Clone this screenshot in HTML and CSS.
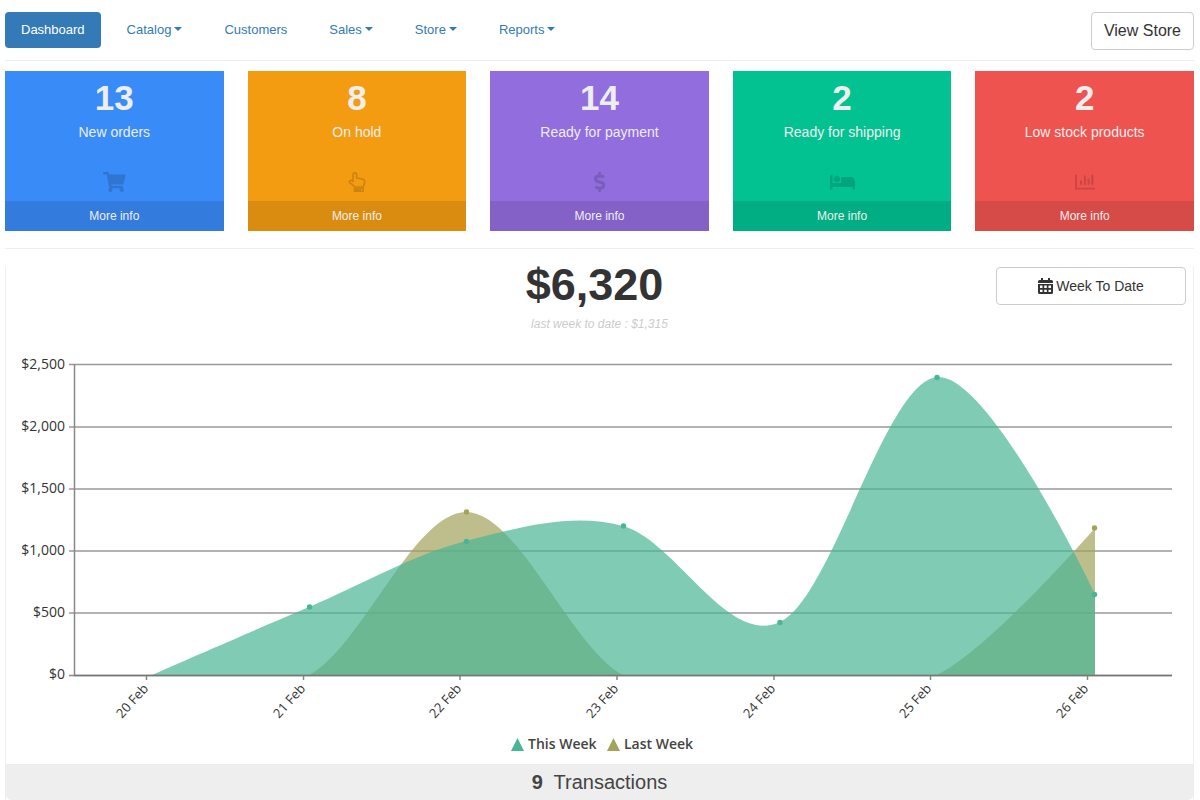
FILE: index.html
```html
<!DOCTYPE html>
<html lang="en">
<head>
<meta charset="utf-8">
<title>Dashboard</title>
<link rel="stylesheet" href="styles.css">
</head>
<body>
<header class="topbar">
  <nav class="tabs">
    <a class="tab active" href="#">Dashboard</a>
    <button class="tab" type="button">Catalog<span class="caret"></span></button>
    <a class="tab" href="#">Customers</a>
    <button class="tab" type="button">Sales<span class="caret"></span></button>
    <button class="tab" type="button">Store<span class="caret"></span></button>
    <button class="tab" type="button">Reports<span class="caret"></span></button>
  </nav>
  <button class="btn view-store" type="button">View Store</button>
</header>

<main>
  <section class="cards">
    <article class="card blue">
      <strong class="count">13</strong>
      <span class="label">New orders</span>
      <svg class="icon" viewBox="0 0 576 512"><path d="M528.12 301.319l47.273-208C578.806 78.301 567.391 64 551.99 64H159.208l-9.166-44.81C147.758 8.021 137.93 0 126.529 0H24C10.745 0 0 10.745 0 24v16c0 13.255 10.745 24 24 24h69.883l70.248 343.435C147.325 417.1 136 435.222 136 456c0 30.928 25.072 56 56 56s56-25.072 56-56c0-15.674-6.447-29.835-16.824-40h209.647C430.447 426.165 424 440.326 424 456c0 30.928 25.072 56 56 56s56-25.072 56-56c0-22.172-12.888-41.332-31.579-50.405l5.517-24.276c3.413-15.018-8.002-29.319-23.403-29.319H218.117l-6.545-32h293.145c11.206 0 20.92-7.754 23.403-18.681z"/></svg>
      <a class="more" href="#">More info</a>
    </article>
    <article class="card orange">
      <strong class="count">8</strong>
      <span class="label">On hold</span>
      <svg class="icon" viewBox="0 0 54 60"><path d="M15 27V8a5.500 5.500 0 0 1 11 0v10l17 3q7 2 7 8c0 7-4 9-4 16H19c-2-7-8-8-13-12-4-5 1-11 9-6z" fill="none" stroke="#000" stroke-width="5"/><path fill-rule="evenodd" d="M18 47.500h29q1 0 1 1V58q0 2-2 2H19q-2 0-2-2v-9.500q0-1 1-1zM39 52v4h4v-4z"/></svg>
      <a class="more" href="#">More info</a>
    </article>
    <article class="card purple">
      <strong class="count">14</strong>
      <span class="label">Ready for payment</span>
      <svg class="icon" viewBox="0 0 288 512"><path d="M209.2 233.4l-108-31.6C88.7 198.2 80 186.5 80 173.500c0-16.3 13.2-29.5 29.5-29.5h66.3c12.2 0 24.2 3.7 34.2 10.5 6.1 4.1 14.3 3.1 19.5-2l34.8-34c7.1-6.9 6.1-18.4-1.8-24.5C238 74.800 207.400 64.100 176 64V16c0-8.8-7.2-16-16-16h-32c-8.8 0-16 7.2-16 16v48h-2.500C45.800 64-5.400 118.700.500 183.600c4.200 46.100 39.400 83.600 83.800 96.600l102.500 30c12.500 3.700 21.200 15.300 21.200 28.300 0 16.300-13.200 29.500-29.500 29.500h-66.300C100 368 88 364.300 78 357.500c-6.100-4.100-14.300-3.100-19.500 2l-34.800 34c-7.100 6.900-6.100 18.400 1.800 24.500 24.500 19.200 55.100 29.900 86.500 30v48c0 8.800 7.200 16 16 16h32c8.800 0 16-7.200 16-16v-48.200c46.600-.9 90.300-28.600 105.700-72.700 21.500-61.600-14.600-124.800-72.500-141.700z"/></svg>
      <a class="more" href="#">More info</a>
    </article>
    <article class="card green">
      <strong class="count">2</strong>
      <span class="label">Ready for shipping</span>
      <svg class="icon" viewBox="0 0 640 512"><path d="M176 256c44.110 0 80-35.890 80-80s-35.890-80-80-80-80 35.890-80 80 35.890 80 80 80zm352-128H304c-8.840 0-16 7.160-16 16v144H64V80c0-8.840-7.160-16-16-16H16C7.160 64 0 71.160 0 80v352c0 8.840 7.160 16 16 16h32c8.840 0 16-7.160 16-16v-48h512v48c0 8.840 7.160 16 16 16h32c8.840 0 16-7.160 16-16V240c0-61.860-50.140-112-112-112z"/></svg>
      <a class="more" href="#">More info</a>
    </article>
    <article class="card red">
      <strong class="count">2</strong>
      <span class="label">Low stock products</span>
      <svg class="icon" viewBox="0 0 512 512"><path d="M12 64h24q12 0 12 12v324h452q12 0 12 12v24q0 12-12 12H20q-20 0-20-20V76q0-12 12-12zM128 220h52v105h-52zM230 92h48v233h-48zM322 168h52v157h-52zM414 68h60v257h-60z"/></svg>
      <a class="more" href="#">More info</a>
    </article>
  </section>

  <section class="panel">
    <div class="summary">
      <div class="totals">
        <h1 class="amount">$6,320</h1>
        <p class="previous">last week to date : $1,315</p>
      </div>
      <button class="btn period" type="button"><svg class="calendar" viewBox="0 0 15 16"><path fill-rule="evenodd" d="M3 0h2v2h5V0h2v2h1.500Q15 2 15 3.500V5H0V3.500Q0 2 1.500 2H3zM0 6h15v8.500q0 1.500-1.500 1.500h-12Q0 16 0 14.500zM2 7.500v2.500h2.500V7.500zM6.200 7.500v2.500h2.600V7.500zM10.500 7.500v2.500H13V7.500zM2 11.700v2.300h2.500v-2.300zM6.200 11.700v2.300h2.600v-2.300zM10.500 11.700v2.300H13v-2.300z"/></svg>Week To Date</button>
    </div>

    <svg class="chart" viewBox="6 340 1187 424" role="img" aria-label="Sales this week and last week">
      <defs><clipPath id="plot"><rect x="74" y="355" width="1098" height="321"/></clipPath></defs>
      <path class="grid" d="M69 364.500H1172M69 427H1172M69 489H1172M69 551H1172M69 613H1172"/>
      <path class="axis" d="M74.500 364V676M69 675.500H1172M146.500 676v4M303.500 676v4M460 676v4M617 676v4M774 676v4M930.500 676v4M1087.500 676v4"/>
      <g clip-path="url(#plot)">
        <path class="last" d="M152 675C152 675 257 702 309 675C361 648 414 512 466 512C518 512 571 648 623 675C675 702 728 675 780 675C832 675 885 700 937 675C989 650 1095 528 1095 528V675Z"/>
        <path class="this" d="M152 675C152 675 257 629 309 607C361 585 414 554 466 541C518 528 571 512 623 526C675 540 728 647 780 622C832 598 885 382 937 377C989 372 1095 594 1095 594V675Z"/>
      </g>
      <g class="dots-last">
        <circle cx="466.500" cy="512" r="2.700"/><circle cx="1094.500" cy="528" r="2.700"/>
      </g>
      <g class="dots-this">
        <circle cx="309.500" cy="607" r="2.700"/><circle cx="466.500" cy="541.500" r="2.700"/><circle cx="623.500" cy="526" r="2.700"/><circle cx="780" cy="622.500" r="2.700"/><circle cx="937" cy="377.500" r="2.700"/><circle cx="1094.500" cy="594.500" r="2.700"/>
      </g>
      <path class="baseline" d="M74 675.500H1172"/>
      <g class="values">
        <text x="65" y="369">$2,500</text>
        <text x="65" y="431">$2,000</text>
        <text x="65" y="493">$1,500</text>
        <text x="65" y="555">$1,000</text>
        <text x="65" y="617">$500</text>
        <text x="65" y="679">$0</text>
      </g>
      <g class="days">
        <text transform="translate(149 689) rotate(-48)">20 Feb</text>
        <text transform="translate(306 689) rotate(-48)">21 Feb</text>
        <text transform="translate(462 689) rotate(-48)">22 Feb</text>
        <text transform="translate(619 689) rotate(-48)">23 Feb</text>
        <text transform="translate(776 689) rotate(-48)">24 Feb</text>
        <text transform="translate(932 689) rotate(-48)">25 Feb</text>
        <text transform="translate(1089 689) rotate(-48)">26 Feb</text>
      </g>
      <g class="legend">
        <path class="key-this" d="M511 751L517.500 738L524 751Z"/>
        <text x="528" y="749">This Week</text>
        <path class="key-last" d="M607 751L613.500 738L620 751Z"/>
        <text x="624" y="749">Last Week</text>
      </g>
    </svg>

    <div class="transactions"><b>9</b>&nbsp; Transactions</div>
  </section>
</main>
</body>
</html>
```

FILE: styles.css
```css
* { box-sizing: border-box; }
body {
  margin: 0;
  padding: 12px 6px 0 5px;
  background: #fff;
  color: #333;
  font-family: "Liberation Sans", Arial, sans-serif;
  font-size: 14px;
}
button { font-family: inherit; cursor: pointer; }
a { text-decoration: none; }

.topbar {
  display: flex;
  justify-content: space-between;
  align-items: flex-start;
  padding-bottom: 10px;
  border-bottom: 1px solid #eee;
}
.tabs { display: flex; gap: 10px; }
.tab {
  display: flex;
  align-items: center;
  height: 36px;
  padding: 0 16px 2px;
  border: 0;
  border-radius: 4px;
  background: none;
  color: #337ab7;
  font-size: 13px;
}
.tab.active { background: #337ab7; color: #fff; }
.caret {
  margin-left: 3px;
  border-top: 4px solid;
  border-left: 4px solid transparent;
  border-right: 4px solid transparent;
}
.btn {
  height: 38px;
  border: 1px solid #ccc;
  border-radius: 4px;
  background: #fff;
  color: #333;
}
.view-store { padding: 0 12px; font-size: 16px; }

.cards {
  display: grid;
  grid-template-columns: repeat(5, 1fr);
  gap: 24px;
  padding: 10px 0 17px;
  border-bottom: 1px solid #eee;
}
.card {
  display: flex;
  flex-direction: column;
  align-items: center;
  padding-top: 6px;
  color: #eee;
}
.blue { background: #398bf7; }
.orange { background: #f39c12; }
.purple { background: #926dde; }
.green { background: #02c292; }
.red { background: #ef5350; }
.count { font-size: 35px; line-height: 42px; }
.label { margin-top: 4px; line-height: 18px; }
.icon { height: 20px; margin: 31px 0 9px; opacity: 0.15; }
.more {
  width: 100%;
  background: rgba(0, 0, 0, 0.1);
  color: #eee;
  font-size: 12px;
  line-height: 30px;
  text-align: center;
}

.panel {
  margin-top: 18px;
  border: solid #eee;
  border-width: 0 1px;
}
.summary {
  display: grid;
  grid-template-columns: 1fr auto 1fr;
  align-items: start;
  padding: 0 7px 7px;
}
.totals { grid-column: 2; text-align: center; }
.amount { margin: 0; padding-right: 10px; font-size: 45px; line-height: 36px; }
.previous {
  margin: 13px 0 0;
  color: #ccc;
  font-size: 12px;
  font-style: italic;
  line-height: 17px;
}
.period {
  display: flex;
  justify-content: center;
  align-items: center;
  gap: 3px;
  width: 190px;
  justify-self: end;
  font-size: 14px;
}
.calendar { width: 15px; height: 16px; fill: #333; }

.chart { display: block; width: 100%; font-family: "Open Sans", "Noto Sans", sans-serif; }
.grid { stroke: #999; stroke-width: 1.5; }
.axis { fill: none; stroke: #888; stroke-width: 1.5; }
.baseline { stroke: #777; stroke-width: 1.5; }
.this { fill: #48b594; fill-opacity: 0.7; }
.last { fill: #a3a35c; fill-opacity: 0.7; }
.dots-this, .key-this { fill: #48b594; }
.dots-last, .key-last { fill: #a3a35c; }
.values, .days { fill: #333; text-anchor: end; }
.values { font-size: 14px; }
.days { font-size: 13px; }
.legend { fill: #444; font-size: 14px; font-weight: 600; }

.transactions {
  border-radius: 0 0 5px 5px;
  background: #eee;
  color: #444;
  font-size: 20px;
  line-height: 36px;
  text-align: center;
}
```
